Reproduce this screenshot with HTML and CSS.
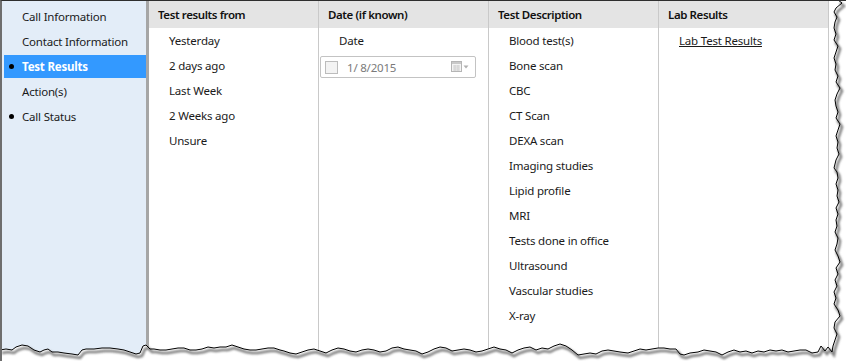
FILE: index.html
```html
<!DOCTYPE html>
<html lang="en">
<head>
    <meta charset="UTF-8">
    <meta name="viewport" content="width=device-width, initial-scale=1.0">
    <title>Test Results</title>
    <link rel="stylesheet" href="styles.css">
</head>
<body>
    <div class="window">
        <nav class="sidebar">
            <ul class="steps">
                <li class="step">Call Information</li>
                <li class="step">Contact Information</li>
                <li class="step done active">Test Results</li>
                <li class="step">Action(s)</li>
                <li class="step done">Call Status</li>
            </ul>
        </nav>

        <main class="grid">
            <section class="col">
                <h2 class="col-head">Test results from</h2>
                <ul class="opts">
                    <li>Yesterday</li>
                    <li>2 days ago</li>
                    <li>Last Week</li>
                    <li>2 Weeks ago</li>
                    <li>Unsure</li>
                </ul>
            </section>

            <section class="col">
                <h2 class="col-head">Date (if known)</h2>
                <ul class="opts">
                    <li>Date</li>
                </ul>
                <div class="datepicker">
                    <span class="check"></span>
                    <span class="date-text">1/ 8/2015</span>
                    <svg class="cal" width="20" height="12" viewBox="0 0 20 12">
                        <rect x="0.5" y="0.5" width="10" height="10" fill="#f4f4f4" stroke="#b5b5b5"/>
                        <rect x="1" y="1" width="9" height="2" fill="#c9c9c9"/>
                        <path d="M2 5h7M2 7h7M2 9h7M4 4v6M7 4v6" stroke="#cfcfcf" stroke-width="1"/>
                        <path d="M12.5 4.5h5l-2.5 3z" fill="#b0b0b0"/>
                    </svg>
                </div>
            </section>

            <section class="col">
                <h2 class="col-head">Test Description</h2>
                <ul class="opts">
                    <li>Blood test(s)</li>
                    <li>Bone scan</li>
                    <li>CBC</li>
                    <li>CT Scan</li>
                    <li>DEXA scan</li>
                    <li>Imaging studies</li>
                    <li>Lipid profile</li>
                    <li>MRI</li>
                    <li>Tests done in office</li>
                    <li>Ultrasound</li>
                    <li>Vascular studies</li>
                    <li>X-ray</li>
                </ul>
            </section>

            <section class="col">
                <h2 class="col-head">Lab Results</h2>
                <ul class="opts">
                    <li><a href="#" class="lab-link">Lab Test Results</a></li>
                </ul>
            </section>
        </main>

        <!-- torn paper edge over the right and bottom -->
        <svg class="torn" width="846" height="361" viewBox="0 0 846 361">
            <defs>
                <filter id="soft" x="-5%" y="-5%" width="110%" height="110%">
                    <feGaussianBlur stdDeviation="1.3"/>
                </filter>
                <path id="edge" d="M838,0 L842,3 L836,8 L834,12 L837,17 L835,22 L834,28 L836,34 L834,40 L838,46 L836,52 L834,58 L836,64 L835,70 L838,76 L836,82 L840,88 L837,94 L835,100 L836,106 L838,112 L836,118 L840,124 L838,130 L836,136 L838,142 L837,148 L839,154 L836,160 L834,168 L837,172 L838,178 L836,184 L838,190 L837,196 L839,202 L836,208 L838,214 L836,220 L837,226 L835,232 L838,238 L837,244 L835,250 L838,256 L840,262 L836,268 L838,274 L835,280 L837,286 L834,292 L836,298 L834,304 L838,310 L840,316 L835,322 L834,328 L837,334 L835,340 L833,346 L832,352 L828,347 L825,351 L821,346 L818,352 L812,353 L806,350 L800,350 L794,351 L788,352 L782,350 L776,351 L770,350 L764,352 L758,351 L752,353 L746,351 L740,352 L734,350 L728,352 L722,355 L716,352 L710,351 L704,350 L698,352 L690,353 L684,355 L680,354 L676,349 L670,349 L664,348 L658,348 L652,349 L646,350 L640,349 L634,351 L628,353 L620,352 L614,351 L608,350 L602,351 L596,354 L590,353 L584,354 L578,355 L572,350 L566,346 L560,344 L554,346 L548,349 L542,348 L536,350 L530,347 L524,348 L518,350 L512,353 L506,350 L500,349 L494,347 L488,349 L482,351 L476,352 L470,350 L464,349 L458,350 L452,351 L446,348 L440,347 L434,349 L428,352 L422,354 L416,351 L410,350 L404,349 L398,347 L392,348 L386,351 L380,352 L374,350 L368,349 L362,350 L356,352 L350,351 L344,349 L338,348 L332,350 L326,353 L320,351 L314,349 L308,350 L302,352 L296,354 L290,353 L284,351 L280,350 L274,348 L268,348 L262,349 L256,350 L250,350 L244,349 L238,347 L232,345 L226,347 L220,347 L214,348 L208,347 L202,349 L196,350 L190,350 L184,348 L178,348 L172,349 L166,350 L160,350 L154,349 L150,349 L146,345 L143,346 L140,353 L136,354 L130,352 L124,350 L118,349 L110,348 L102,348 L94,349 L86,349 L82,350 L78,355 L72,354 L64,353 L58,352 L52,352 L48,349 L44,350 L40,352 L34,350 L28,346 L22,345 L16,347 L12,350 L6,349 L0,350"/>
            </defs>
            <path class="torn-bg" d="M846,0 L838,0 L842,3 L836,8 L834,12 L837,17 L835,22 L834,28 L836,34 L834,40 L838,46 L836,52 L834,58 L836,64 L835,70 L838,76 L836,82 L840,88 L837,94 L835,100 L836,106 L838,112 L836,118 L840,124 L838,130 L836,136 L838,142 L837,148 L839,154 L836,160 L834,168 L837,172 L838,178 L836,184 L838,190 L837,196 L839,202 L836,208 L838,214 L836,220 L837,226 L835,232 L838,238 L837,244 L835,250 L838,256 L840,262 L836,268 L838,274 L835,280 L837,286 L834,292 L836,298 L834,304 L838,310 L840,316 L835,322 L834,328 L837,334 L835,340 L833,346 L832,352 L828,347 L825,351 L821,346 L818,352 L812,353 L806,350 L800,350 L794,351 L788,352 L782,350 L776,351 L770,350 L764,352 L758,351 L752,353 L746,351 L740,352 L734,350 L728,352 L722,355 L716,352 L710,351 L704,350 L698,352 L690,353 L684,355 L680,354 L676,349 L670,349 L664,348 L658,348 L652,349 L646,350 L640,349 L634,351 L628,353 L620,352 L614,351 L608,350 L602,351 L596,354 L590,353 L584,354 L578,355 L572,350 L566,346 L560,344 L554,346 L548,349 L542,348 L536,350 L530,347 L524,348 L518,350 L512,353 L506,350 L500,349 L494,347 L488,349 L482,351 L476,352 L470,350 L464,349 L458,350 L452,351 L446,348 L440,347 L434,349 L428,352 L422,354 L416,351 L410,350 L404,349 L398,347 L392,348 L386,351 L380,352 L374,350 L368,349 L362,350 L356,352 L350,351 L344,349 L338,348 L332,350 L326,353 L320,351 L314,349 L308,350 L302,352 L296,354 L290,353 L284,351 L280,350 L274,348 L268,348 L262,349 L256,350 L250,350 L244,349 L238,347 L232,345 L226,347 L220,347 L214,348 L208,347 L202,349 L196,350 L190,350 L184,348 L178,348 L172,349 L166,350 L160,350 L154,349 L150,349 L146,345 L143,346 L140,353 L136,354 L130,352 L124,350 L118,349 L110,348 L102,348 L94,349 L86,349 L82,350 L78,355 L72,354 L64,353 L58,352 L52,352 L48,349 L44,350 L40,352 L34,350 L28,346 L22,345 L16,347 L12,350 L6,349 L0,350 L0,361 L846,361 Z"/>
            <use href="#edge" class="torn-shadow" transform="translate(2,3)" filter="url(#soft)"/>
            <use href="#edge" class="torn-line"/>
        </svg>
    </div>
</body>
</html>
```

FILE: styles.css
```css
body {
    margin: 0;
    padding: 0;
    background: white;
    font-family: "Noto Sans", "Liberation Sans", sans-serif;
    font-size: 11.5px;
    letter-spacing: -0.2px;
    color: #1a1a1a;
}

.window {
    position: relative;
    width: 846px;
    height: 361px;
    display: flex;
    border-top: 1px solid #2e2e2e;
    border-left: 2px solid #6e6e6e;
    box-sizing: border-box;
    overflow: hidden;
}

/* Wizard steps on the left */
.sidebar {
    width: 144px;
    flex: none;
    background: #e3edf8;
    border-right: 3px solid #a6a6a6;
    padding-top: 3px;
}

.steps {
    list-style: none;
    margin: 0;
    padding: 0;
}

.step {
    position: relative;
    height: 25px;
    line-height: 25px;
    padding-left: 20px;
    white-space: nowrap;
}

.step.done::before {
    content: "";
    position: absolute;
    left: 7px;
    top: 10px;
    width: 5px;
    height: 5px;
    border-radius: 50%;
    background: #000;
}

.step.active {
    background: #3399ff;
    color: white;
    font-weight: bold;
    height: 23px;
    line-height: 23px;
    margin: 1px 0 1px 2px;
    padding-left: 18px;
}

.step.active::before {
    left: 5px;
    top: 9px;
}

/* Columns */
.grid {
    display: flex;
    flex: none;
}

.col {
    width: 169px;
    border-right: 1px solid #c9c9c9;
}

.col-head {
    margin: 0;
    height: 27px;
    line-height: 27px;
    background: #e4e4e4;
    padding-left: 9px;
    font-size: 11.5px;
    font-weight: 600;
    letter-spacing: -0.4px;
    color: #111;
}

.opts {
    list-style: none;
    margin: 0;
    padding: 0 0 0 20px;
}

.opts li {
    height: 25px;
    line-height: 25px;
    white-space: nowrap;
}

.lab-link {
    color: #1a1a1a;
    text-decoration: underline;
}

/* Date picker */
.datepicker {
    display: flex;
    align-items: center;
    width: 154px;
    height: 20px;
    margin: 3px 0 0 1px;
    border: 1px solid #c3c3c3;
    border-radius: 2px;
    background: white;
}

.check {
    width: 11px;
    height: 11px;
    margin-left: 4px;
    border: 1px solid #bcbcbc;
    background: #f3f3f3;
}

.date-text {
    margin-left: 9px;
    color: #7a7a7a;
    flex: 1;
}

.cal {
    margin-right: 4px;
}

.torn {
    position: absolute;
    top: -1px;
    left: -2px;
    pointer-events: none;
}

.torn-bg {
    fill: white;
}

.torn-shadow {
    fill: none;
    stroke: #7d7d7d;
    stroke-width: 2.5;
}

.torn-line {
    fill: none;
    stroke: #000;
    stroke-width: 1;
}
```
